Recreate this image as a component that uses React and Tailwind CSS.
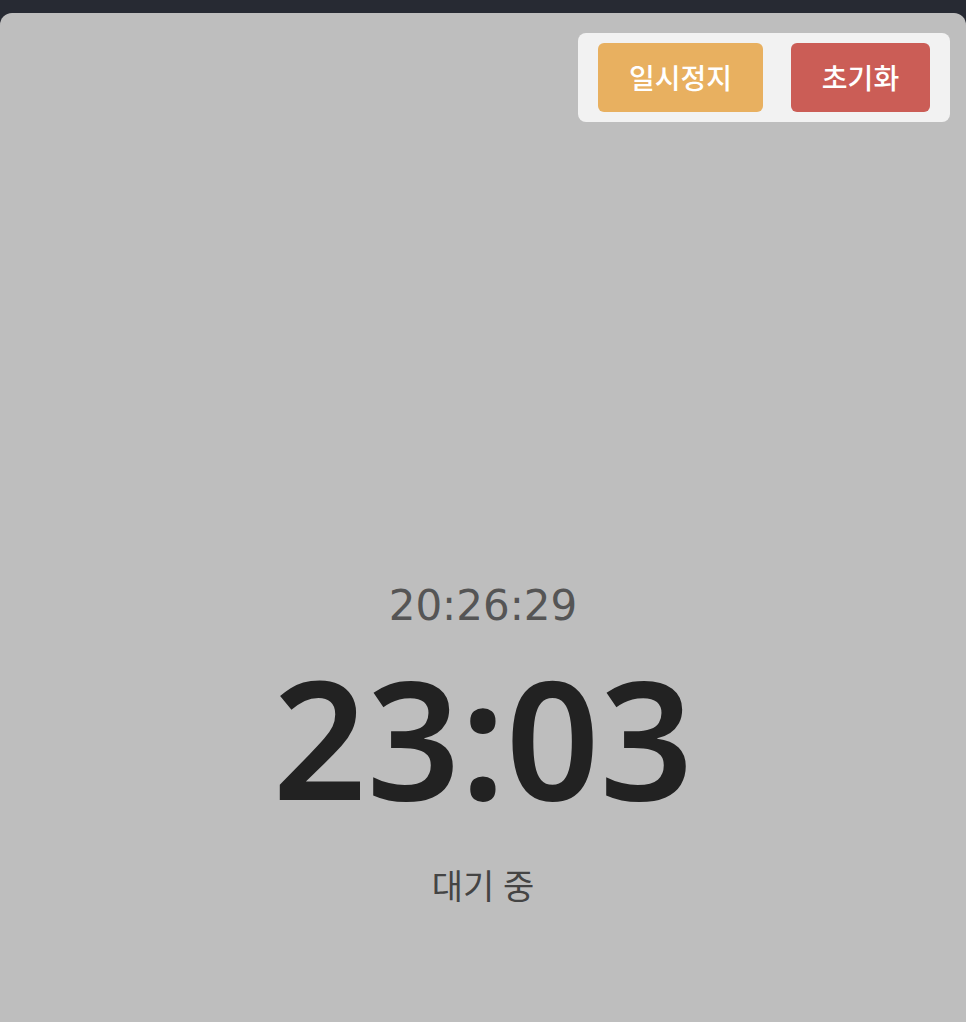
import { useState } from 'react';

export default function App() {
  const [paused, setPaused] = useState(false);

  return (
    <div
      className="min-h-screen bg-[#272a33] pt-[13px]"
      style={{ fontFamily: '"Noto Sans", "Noto Sans CJK KR", sans-serif' }}
    >
      <div className="h-[1009px] bg-[#bebebe] rounded-t-xl flex flex-col">
        {/* controls */}
        <div className="flex justify-end pt-5 pr-4">
          <div className="flex gap-7 bg-[#f2f2f2] rounded-lg px-5 py-[10px]">
            <button
              onClick={() => setPaused(!paused)}
              className="h-[69px] w-[165px] rounded-md bg-[#e8b060] text-white text-[28px] font-medium"
            >
              {paused ? '재개' : '일시정지'}
            </button>
            <button className="h-[69px] w-[139px] rounded-md bg-[#cb5d56] text-white text-[28px] font-medium">
              초기화
            </button>
          </div>
        </div>

        {/* clock */}
        <div className="flex flex-col items-center mt-[456px]">
          <div className="font-['DejaVu_Sans',sans-serif] text-[42px] leading-[56px] text-[#555555]">20:26:29</div>
          <div className="text-[164px] leading-[190px] font-semibold text-[#222222] mt-2">23:03</div>
          <div className="text-[34px] leading-[44px] text-[#444444] mt-8">대기 중</div>
        </div>
      </div>
    </div>
  );
}
